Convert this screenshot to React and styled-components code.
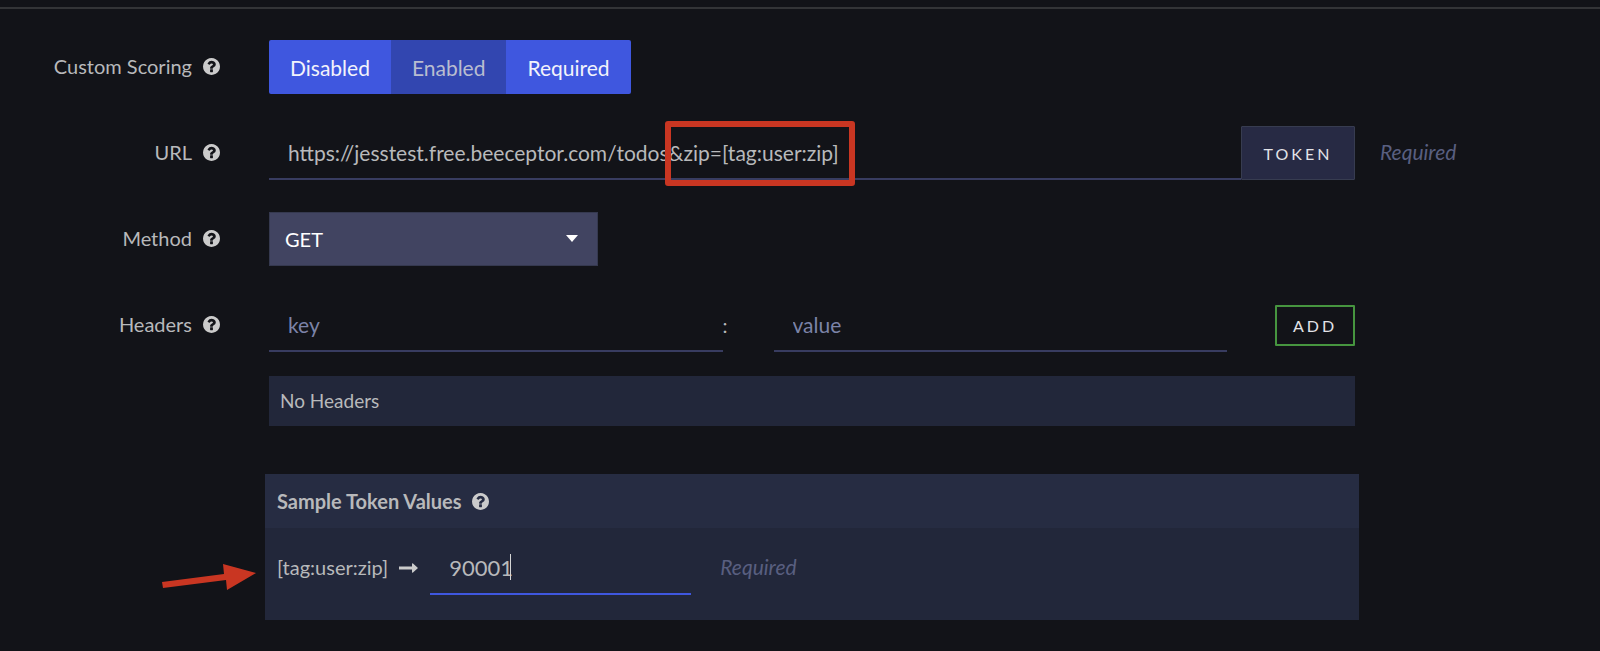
import React, { useState } from "react"
import styled, { createGlobalStyle } from "styled-components"

const GlobalStyle = createGlobalStyle`
  * {
    box-sizing: border-box;
  }

  body {
    margin: 0;
    background: #121318;
    color: #b8b9bb;
    font-family: Lato, "Liberation Sans", sans-serif;
    font-size: 20px;
  }
`

const HelpIcon = () => (
  <HelpSvg viewBox="128 128 1536 1536" aria-hidden="true">
    <path d="M1024 1376v-192q0-14-9-23t-23-9h-192q-14 0-23 9t-9 23v192q0 14 9 23t23 9h192q14 0 23-9t9-23zm256-672q0-88-55.5-163t-138.5-116-170-41q-243 0-371 213-15 24 8 42l132 100q7 6 19 6 16 0 25-12 53-68 86-92 34-24 86-24 48 0 85.5 26t37.5 59q0 38-20 61t-68 45q-63 28-115.5 86.5t-52.5 125.5v36q0 14 9 23t23 9h192q14 0 23-9t9-23q0-19 21.5-49.5t54.5-49.5q32-18 49-28.5t46-35 44.5-48 28-60.5 12.5-81zm384 192q0 209-103 385.5t-279.5 279.5-385.5 103-385.5-103-279.5-279.5-103-385.5 103-385.5 279.5-279.5 385.5-103 385.5 103 279.5 279.5 103 385.5z" />
  </HelpSvg>
)

const scoringOptions = ["Disabled", "Enabled", "Required"]

const App = () => {
  const [scoring, setScoring] = useState("Enabled")
  const [url, setUrl] = useState(
    "https://jesstest.free.beeceptor.com/todos&zip=[tag:user:zip]"
  )
  const [zip, setZip] = useState("90001")

  return (
    <Page>
      <GlobalStyle />
      <Divider />
      <Form onSubmit={e => e.preventDefault()}>
        <Row>
          <Label as="span" id="scoring-label">
            Custom Scoring <HelpIcon />
          </Label>
          <ButtonGroup role="group" aria-labelledby="scoring-label">
            {scoringOptions.map(option => (
              <GroupButton
                key={option}
                type="button"
                $active={option === scoring}
                aria-pressed={option === scoring}
                onClick={() => setScoring(option)}
              >
                {option}
              </GroupButton>
            ))}
          </ButtonGroup>
        </Row>

        <Row>
          <Label htmlFor="url">
            URL <HelpIcon />
          </Label>
          <UrlField>
            <TextInput
              id="url"
              value={url}
              onChange={e => setUrl(e.target.value)}
            />
            <TokenButton type="button">TOKEN</TokenButton>
            <Highlight />
          </UrlField>
          <Hint>Required</Hint>
        </Row>

        <Row>
          <Label htmlFor="method">
            Method <HelpIcon />
          </Label>
          <SelectWrapper>
            <Select id="method" defaultValue="GET">
              <option>GET</option>
              <option>POST</option>
            </Select>
            <SelectArrow viewBox="0 0 12 7" aria-hidden="true">
              <path d="M0 0h12L6 7z" />
            </SelectArrow>
          </SelectWrapper>
        </Row>

        <Row>
          <Label htmlFor="header-key">
            Headers <HelpIcon />
          </Label>
          <HeaderFields>
            <TextInput id="header-key" placeholder="key" />
            <Colon>:</Colon>
            <TextInput aria-label="Header value" placeholder="value" />
            <AddButton type="button">ADD</AddButton>
          </HeaderFields>
        </Row>
      </Form>

      <EmptyHeaders>No Headers</EmptyHeaders>

      <TokenPanel>
        <PanelTitle>
          Sample Token Values <HelpIcon />
        </PanelTitle>
        <PanelBody>
          <TokenName htmlFor="token-zip">[tag:user:zip]</TokenName>
          <LongArrow viewBox="0 0 19 10" aria-hidden="true">
            <path d="M0 3.6h13V1q0-1.2 1-.4l5 4.4-5 4.4q-1 .8-1-.4V6.4H0z" />
          </LongArrow>
          <TokenField>
            <TokenInput
              id="token-zip"
              value={zip}
              onChange={e => setZip(e.target.value)}
            />
            <Caret />
          </TokenField>
          <Hint>Required</Hint>
        </PanelBody>
        <Pointer viewBox="0 0 96 28" aria-hidden="true">
          <path d="M0 18L62 10L61 0L94 9L65 26L64 16L1 24z" />
        </Pointer>
      </TokenPanel>
    </Page>
  )
}

const Page = styled.main`
  padding: 7px 0 31px;
`

const Divider = styled.hr`
  height: 2px;
  margin: 0 0 31px;
  border: 0;
  background: #333437;
`

const Form = styled.form`
  display: grid;
  gap: 32px;
`

const Row = styled.div`
  display: grid;
  grid-template-columns: 220px minmax(0, 1fr) 196px;
  column-gap: 49px;
  align-items: start;

  > :nth-child(3) {
    margin-left: -24px;
  }
`

const Label = styled.label`
  display: flex;
  align-items: center;
  justify-content: flex-end;
  gap: 11px;
  line-height: 52px;
`

const HelpSvg = styled.svg`
  flex: none;
  width: 17px;
  height: 17px;
  fill: #cbcbcb;
`

const ButtonGroup = styled.div`
  display: flex;
  border-radius: 2px;
  overflow: hidden;
  justify-self: start;
`

const GroupButton = styled.button`
  height: 54px;
  padding: 0 21px;
  border: 0;
  background: ${props => (props.$active ? "#3246b0" : "#3f57df")};
  color: ${props => (props.$active ? "#b9bdd0" : "#f2f3fb")};
  font-family: inherit;
  font-size: 21px;
`

const TextInput = styled.input`
  flex: 1;
  min-width: 0;
  height: 54px;
  padding: 0 19px;
  border: 0;
  border-bottom: 2px solid #383c60;
  border-radius: 0;
  outline: 0;
  background: transparent;
  color: #b8b9bb;
  font-family: inherit;
  font-size: 21px;

  &::placeholder {
    color: #7c83a8;
    opacity: 1;
  }
`

const UrlField = styled.div`
  position: relative;
  display: flex;
`

const TokenButton = styled.button`
  width: 114px;
  height: 54px;
  border: 1px solid #373c50;
  border-radius: 1px;
  background: #272a44;
  color: #e2e3e8;
  font-family: inherit;
  font-size: 16px;
  letter-spacing: 3px;
`

/* red frame around the query string part of the url */
const Highlight = styled.span`
  position: absolute;
  left: 396px;
  top: -5px;
  width: 190px;
  height: 65px;
  border: 6px solid #c93622;
  border-radius: 3px;
  pointer-events: none;
`

const Hint = styled.em`
  color: #595f80;
  font-size: 21px;
  line-height: 52px;
`

const SelectWrapper = styled.div`
  position: relative;
  width: 329px;
`

const Select = styled.select`
  appearance: none;
  width: 100%;
  height: 54px;
  padding: 0 15px;
  border: 1px solid #35394f;
  border-radius: 0;
  background: #414461;
  color: #fff;
  font-family: inherit;
  font-size: 20px;
`

const SelectArrow = styled.svg`
  position: absolute;
  right: 20px;
  top: 23px;
  width: 12px;
  height: 7px;
  fill: #fff;
  pointer-events: none;
`

const HeaderFields = styled.div`
  display: flex;
  align-items: center;
`

const Colon = styled.span`
  width: 51px;
`

const AddButton = styled.button`
  width: 80px;
  height: 41px;
  margin-left: 48px;
  border: 2px solid #46953f;
  border-radius: 1px;
  background: transparent;
  color: #e2e3e8;
  font-family: inherit;
  font-size: 16px;
  letter-spacing: 3px;
`

const EmptyHeaders = styled.div`
  margin: 24px 245px 48px 269px;
  padding: 0 11px;
  background: #22273a;
  font-size: 19px;
  line-height: 50px;
`

const TokenPanel = styled.section`
  position: relative;
  margin: 0 241px 0 265px;
  background: #22273a;
`

const PanelTitle = styled.h2`
  display: flex;
  align-items: center;
  gap: 10px;
  margin: 0;
  padding: 0 12px;
  background: #262c42;
  font-size: 20px;
  font-weight: 700;
  line-height: 54px;
`

const PanelBody = styled.div`
  display: flex;
  padding: 13px 12px 25px;
`

const TokenName = styled.label`
  line-height: 52px;
`

const LongArrow = styled.svg`
  width: 19px;
  height: 10px;
  margin: 22px 12px 0 11px;
  fill: #cbcbcb;
`

const TokenField = styled.div`
  position: relative;
  display: flex;
  width: 261px;
  margin-right: 29px;
`

const TokenInput = styled(TextInput)`
  border-bottom-color: #3f57df;
  font-size: 22px;
`

const Caret = styled.span`
  position: absolute;
  left: 80px;
  top: 13px;
  width: 1px;
  height: 26px;
  background: #d5d5d5;
`

const Pointer = styled.svg`
  position: absolute;
  left: -103px;
  top: 90px;
  width: 96px;
  height: 28px;
  fill: #c93622;
`

export default App
